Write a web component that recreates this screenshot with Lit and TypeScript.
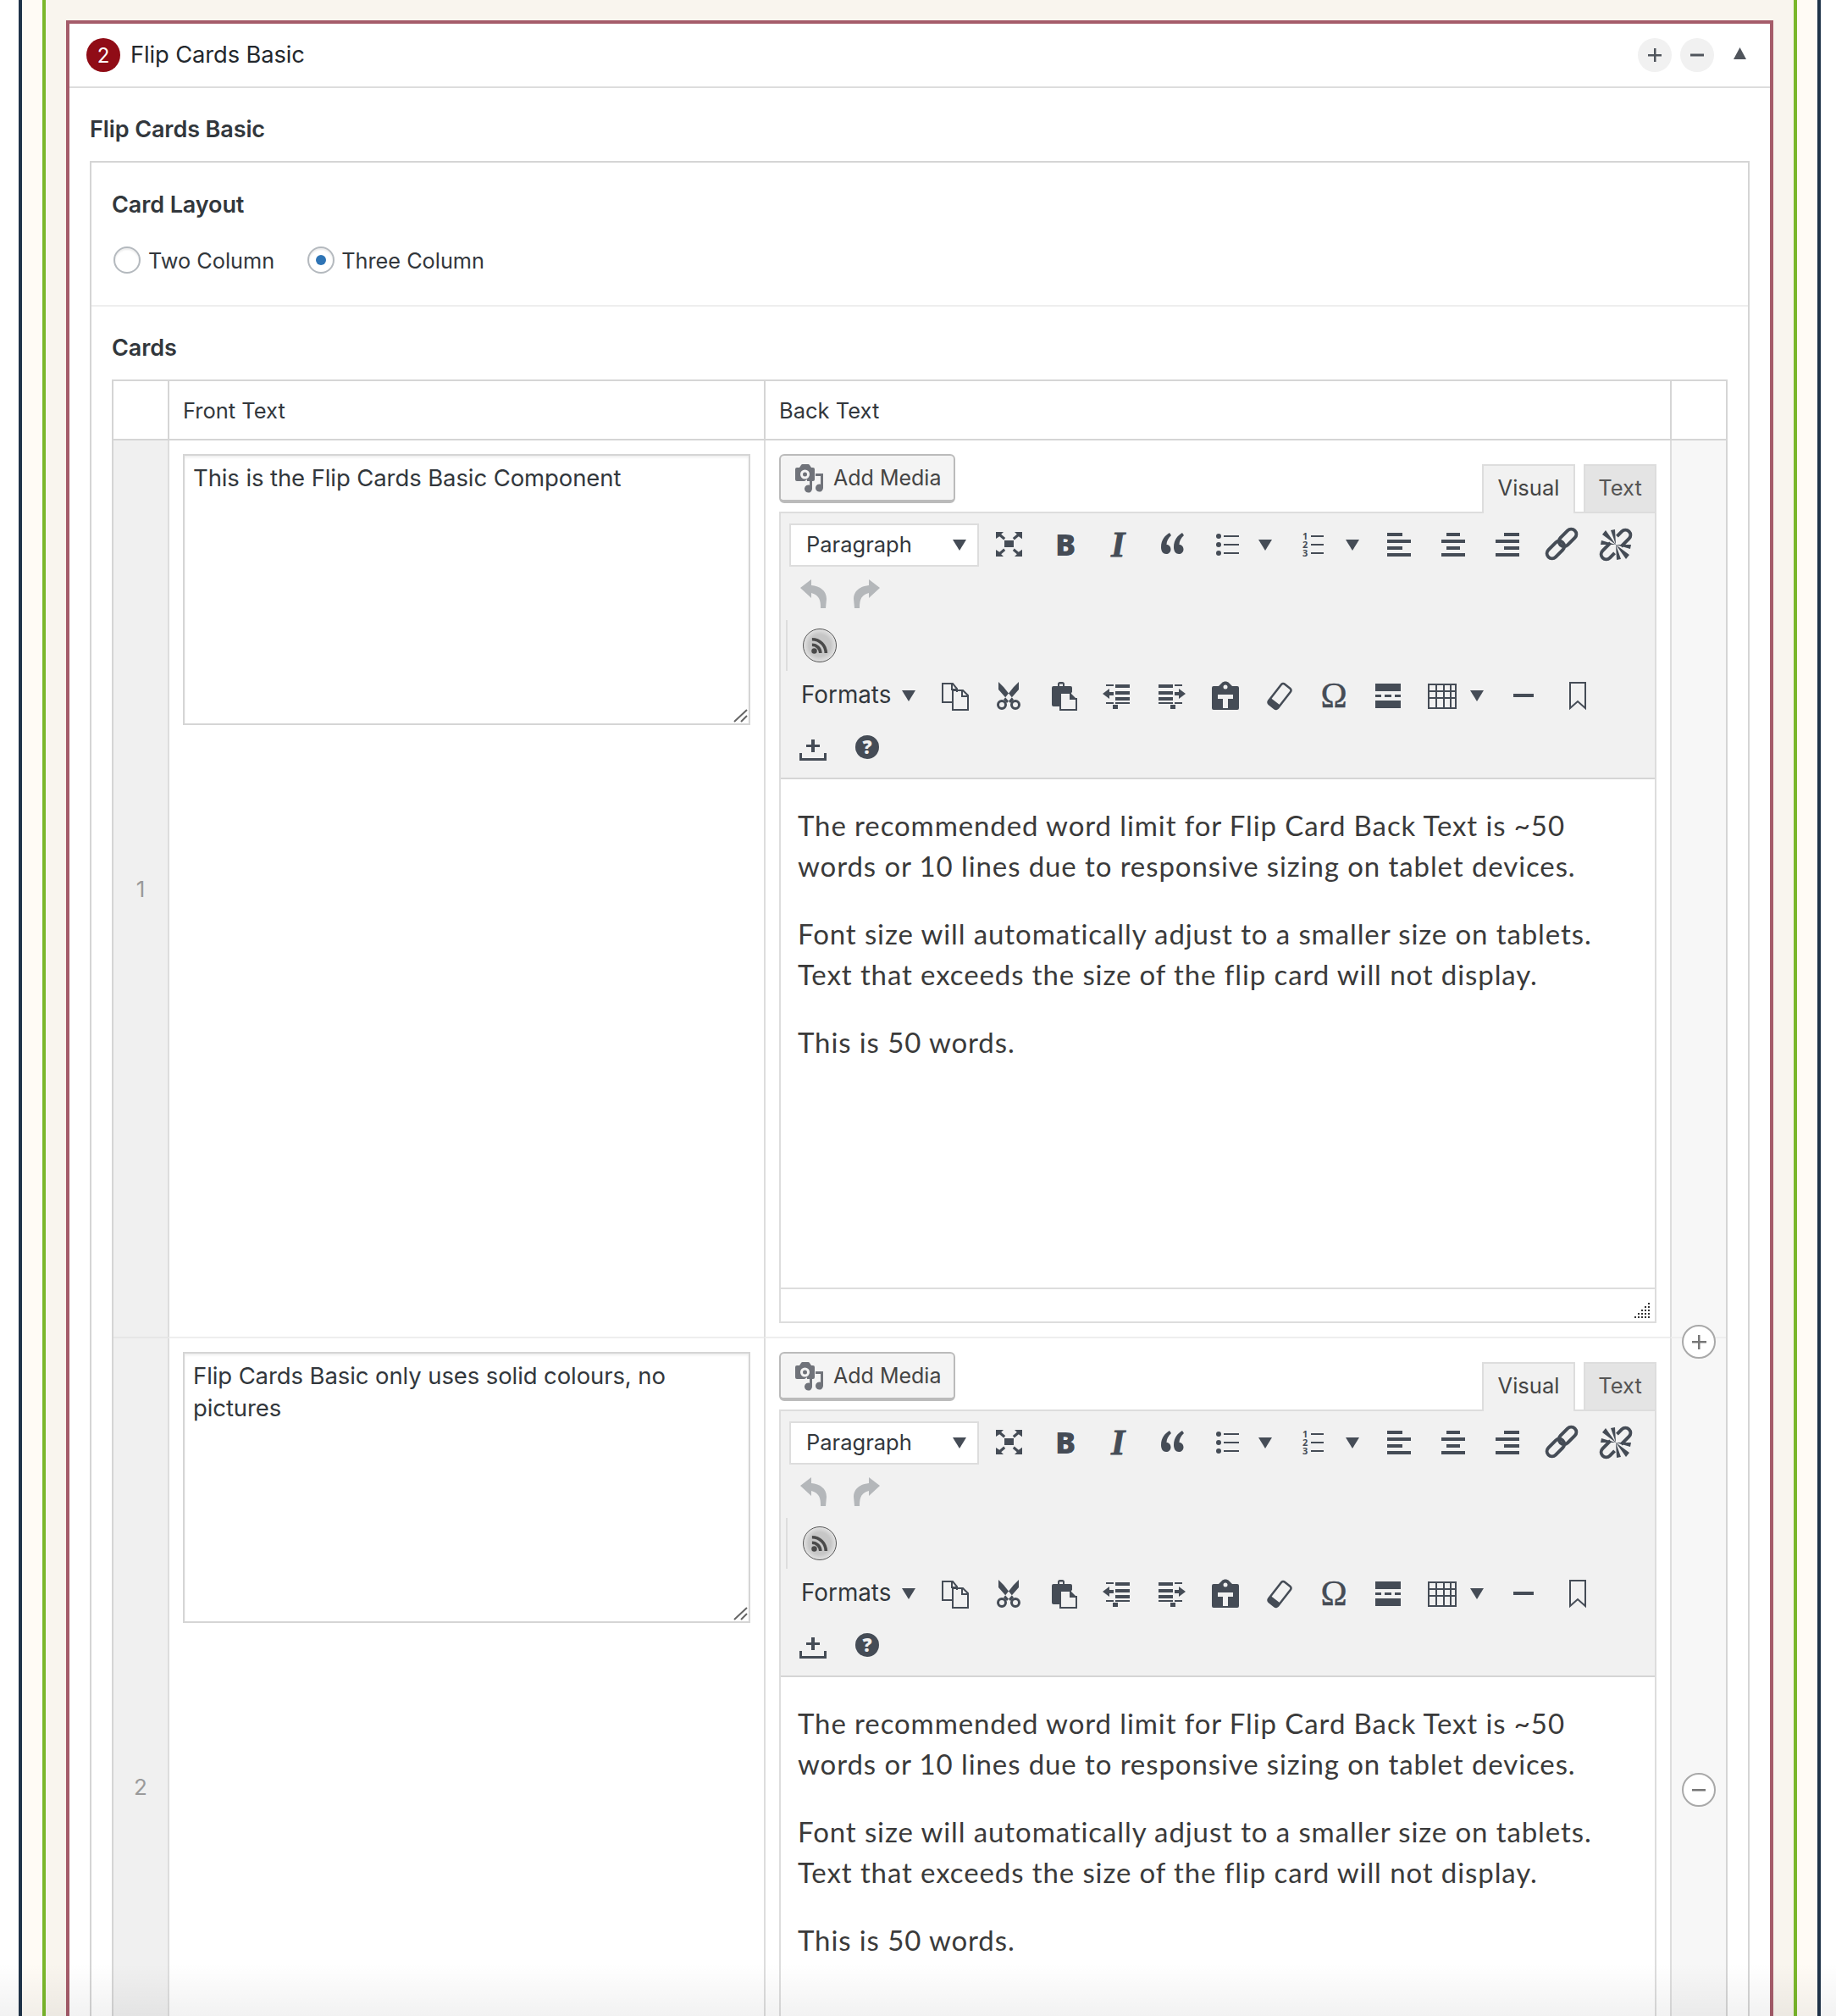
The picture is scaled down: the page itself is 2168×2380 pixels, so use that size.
import { LitElement, html, css, svg } from "lit";
import { customElement } from "lit/decorators.js";

const clip = svg`<rect x="7" y="9" width="24" height="24" rx="2"/><path d="M14 9V6.500C14 5 15 4 16.500 4h3C21 4 22 5 22 6.500V9h-2V6.500h-4V9z"/><path d="M16 16h14l7 7v15H16z" fill="#f1f1f1"/><path d="M17 17h12v7h7v13H17z" fill="none" stroke="currentColor" stroke-width="2"/><path d="M29 17l7 7h-7z"/>`;

const ICONS: Record<string, unknown> = {
  fullscreen: svg`<path d="M15 15h11v8H15zM5 5h9l-2.800 2.800 5 4.200-2 2.400-5-4.200L5 13zM36 5h-9l2.800 2.800-5 4.200 2 2.400 5-4.200 4.200 3zM5 34h9l-2.800-2.800 5-4.200-2-2.400-5 4.200L5 26zM36 34h-9l2.800-2.800-5-4.200 2-2.400 5 4.200 4.200-3z"/>`,
  bullets: svg`<circle cx="12" cy="10" r="3"/><circle cx="12" cy="20" r="3"/><circle cx="12" cy="30" r="3"/><path d="M18 9h18v2H18zM18 19h18v2H18zM18 29h18v2H18z"/>`,
  numlist: svg`<path d="M18 9h15v2H18zM18 19h15v2H18zM18 29h15v2H18z"/>`,
  quote: svg`<path d="M18 6c-5 3-10 8-10 17 0 5 2.500 8 6 8 3 0 5.500-2 5.500-5.500 0-3-2-5.500-5-5.500 0-4 2-8 5.500-11zM33 6c-5 3-10 8-10 17 0 5 2.500 8 6 8 3 0 5.500-2 5.500-5.500 0-3-2-5.500-5-5.500 0-4 2-8 5.500-11z"/>`,
  left: svg`<path d="M6 6h18v4H6zM6 14h28v4H6zM6 22h18v4H6zM6 30h28v4H6z"/>`,
  center: svg`<path d="M12 6h16v4H12zM6 14h28v4H6zM12 22h16v4H12zM6 30h28v4H6z"/>`,
  right: svg`<path d="M16 6h18v4H16zM6 14h28v4H6zM16 22h18v4H16zM6 30h28v4H6z"/>`,
  link: svg`<g transform="rotate(-45 20 19)" fill="none" stroke="currentColor" stroke-width="4"><rect x="-2" y="13" width="24" height="12" rx="6"/><rect x="18" y="13" width="24" height="12" rx="6"/></g>`,
  unlink: svg`<g transform="rotate(-45 20 20)" fill="none" stroke="currentColor" stroke-width="4"><path d="M17 14H4a6 6 0 000 12H12"/><path d="M23 26h13a6 6 0 000-12H28"/></g><path d="M20 20L4 8l4-5zM20 20L14 3l5-1zM20 20L3 15l-1 5zM20 20l16 12-4 5zM20 20l6 17-5 1zM20 20l17 5 1-5z"/>`,
  undo: svg`<path d="M5 13L18 3v7c10 1 18 6 18 16l-1 11-6 0c0-9-1-15-11-18v6z"/>`,
  redo: svg`<path d="M35 13L22 3v7C12 11 4 16 4 26l1 11 6 0c0-9 1-15 11-18v6z"/>`,
  copy: svg`<g fill="none" stroke="currentColor" stroke-width="2"><path d="M17 28H6V6h12l5 6v4M17 6v7h6"/><path d="M18 14h12l6 6v17H18zM29 14v7h7"/></g>`,
  scissors: svg`<path d="M8 4l6 6 12 15-4 4L8 13zM32 4l-6 6-12 15 4 4 14-16z"/><circle cx="12" cy="31" r="4.500" fill="none" stroke="currentColor" stroke-width="3"/><circle cx="28" cy="31" r="4.500" fill="none" stroke="currentColor" stroke-width="3"/>`,
  paste: clip,
  outdent: svg`<path d="M7 7h9v2H7zM18 7h17v4H18zM18 15h17v4H18zM18 22h17v4H18zM7 28h9v2H7zM18 28h17v2H18zM15 31h6v5h-6z M3 18l8-6v4h5v4h-5v4z"/>`,
  indent: svg`<path d="M33 7h-9v2h9zM22 7H5v4h17zM22 15H5v4h17zM22 22H5v4h17zM33 28h-9v2h9zM22 28H5v2h17zM25 31h-6v5h6zM37 18l-8-6v4h-5v4h5v4z"/>`,
  pastetext: svg`<path d="M6 9h6l4-4c2-2 6-2 8 0l4 4h6a2 2 0 012 2v24a2 2 0 01-2 2H6a2 2 0 01-2-2V11a2 2 0 012-2z"/><circle cx="20" cy="10" r="2.500" fill="#f1f1f1"/><path d="M11 19h18v5h-6v11h-6V24h-6z" fill="#f1f1f1"/>`,
  eraser: svg`<g transform="rotate(-52 20 21)"><rect x="5" y="14" width="30" height="14" rx="3" fill="none" stroke="currentColor" stroke-width="2.500"/><path d="M5 17a3 3 0 013-3h4v14H8a3 3 0 01-3-3z"/></g>`,
  omega: svg`<text x="20" y="34" class="omega">Ω</text>`,
  pagebreak: svg`<path d="M5 6h30v9H5zM5 19h7v3H5zM16 19h8v3h-8zM28 19h7v3h-7zM5 26h30v9H5z"/>`,
  table: svg`<path d="M3 6h34v30H3zm2 2v6h7V8zm9 0v6h7V8zm9 0v6h6V8zm8 0v6h4V8zM5 16v6h7v-6zm9 0v6h7v-6zm9 0v6h6v-6zm8 0v6h4v-6zM5 24v10h7V24zm9 0v10h7V24zm9 0v10h6V24zm8 0v10h4V24z" fill-rule="evenodd"/>`,
  hr: svg`<path d="M8 18h24v4H8z"/>`,
  bookmark: svg`<path d="M11 5h18v30l-9-8-9 8z" fill="none" stroke="currentColor" stroke-width="2"/>`,
  insert: svg`<path d="M18 11h4v6h6v3h-6v6h-4v-6h-6v-3h6zM4 27h3v6h26v-6h3v9H4z"/>`,
  help: svg`<circle cx="20" cy="20" r="14"/><text x="20" y="28" class="qmark">?</text>`,
};

const caret = html`<svg class="caret" viewBox="0 0 16 13"><path d="M0 0h16L8 13z"/></svg>`;

const icon = (name: string, cls = "") =>
  html`<span class="tool ${cls}"><svg viewBox="0 0 40 40">${ICONS[name]}</svg></span>`;

const glyph = (ch: string, cls: string) => html`<span class="tool"><span class=${cls}>${ch}</span></span>`;

const split = (name: string, cls: string) =>
  html`<span class="tool ${cls}"><svg viewBox="0 0 40 40">${ICONS[name]}</svg>${caret}</span>`;

const numlist = html`<span class="tool split"><span class="nums">${"1\n2\n3"}</span><svg viewBox="0 0 40 40">${ICONS.numlist}</svg>${caret}</span>`;

const mediaIcon = html`<svg class="media" viewBox="0 0 36 36">
  <path fill-rule="evenodd" d="M4 6h3l2-3a2 2 0 012-1h6a2 2 0 012 1l2 3h2a2 2 0 012 2v12a2 2 0 01-2 2H16v-2l-3 2H4a2 2 0 01-2-2V8a2 2 0 012-2zm9.500 2.500a5.500 5.500 0 100 11 5.500 5.500 0 000-11z"/>
  <circle cx="13.500" cy="14" r="2.500"/>
  <path d="M26 13h9v17a4.500 4.500 0 11-3-4.200V16h-6z"/>
  <path d="M22 22v9a4.500 4.500 0 11-3-4.200V22z"/>
</svg>`;

const grip = html`<svg class="grip" viewBox="0 0 18 18">
  ${[
    [16, 0], [16, 4], [12, 4], [16, 8], [12, 8], [8, 8], [16, 12], [12, 12], [8, 12], [4, 12], [16, 16], [12, 16], [8, 16], [4, 16], [0, 16],
  ].map(([x, y]) => svg`<rect x=${x} y=${y} width="2" height="2"/>`)}
</svg>`;

const editor = () => html`
  <div class="wp-head">
    <button class="add-media">${mediaIcon}<span>Add Media</span></button>
    <div class="tabs"><span class="tab on">Visual</span><span class="tab">Text</span></div>
  </div>
  <div class="mce">
    <div class="toolbar">
      <div class="tr r1">
        <span class="select"><span>Paragraph</span>${caret}</span>
        ${icon("fullscreen")}
        ${glyph("B", "bold")}
        ${glyph("I", "ital")}
        ${icon("quote")}
        ${split("bullets", "split")}
        ${numlist}
        ${icon("left")}${icon("center")}${icon("right")}${icon("link")}${icon("unlink")}
      </div>
      <div class="tr r2">${icon("undo", "off")}${icon("redo", "off")}</div>
      <div class="tr r3"><span class="rss"><svg viewBox="0 0 20 20"><circle cx="5" cy="15" r="2.500"/><path d="M3 8a9 9 0 019 9h-2.800A6.200 6.200 0 003 10.800zM3 3a14 14 0 0114 14h-2.800A11.200 11.200 0 003 5.800z"/></svg></span></div>
      <div class="tr r4">
        <span class="formats"><span>Formats</span>${caret}</span>
        ${icon("copy")}${icon("scissors")}${icon("paste")}${icon("outdent")}${icon("indent")}${icon("pastetext")}${icon("eraser")}${icon("omega")}${icon("pagebreak")}
        ${split("table", "split narrow")}
        ${icon("hr")}${icon("bookmark")}
      </div>
      <div class="tr r5">${icon("insert")}${icon("help")}</div>
    </div>
    <div class="content">
      <p>The recommended word limit for Flip Card Back Text is ~50 words or 10 lines due to responsive sizing on tablet devices.</p>
      <p>Font size will automatically adjust to a smaller size on tablets. Text that exceeds the size of the flip card will not display.</p>
      <p>This is 50 words.</p>
    </div>
    <div class="status">${grip}</div>
  </div>
`;

@customElement("app-root")
export class AppRoot extends LitElement {
  static styles = css`
    :host {
      display: block;
      position: relative;
      height: 2380px;
      overflow: hidden;
      box-sizing: border-box;
      padding: 0 18px 0 22px;
      background: #fff;
      font-family: Inter, "Liberation Sans", sans-serif;
      color: #32373c;
    }
    * { box-sizing: border-box; }
    .navy { border: solid #1f3349; border-width: 0 4px; padding: 0 24px; background: #fffbf5; height: 100%; }
    .green { border: solid #7ab72b; border-width: 0 4px; padding: 24px 24px 0; background: #f9f5ee; height: 100%; }
    .panel { border: 4px solid #a55c6a; border-bottom: 0; background: #fff; height: 100%; }
    .bar { height: 76px; border-bottom: 2px solid #ddd; display: flex; align-items: center; padding: 0 28px 0 20px; }
    .badge { width: 40px; height: 40px; border-radius: 50%; background: #900c16; color: #fff; font-size: 24px; display: flex; align-items: center; justify-content: center; margin-right: 12px; }
    .bar-title { font-size: 27.300px; color: #23282d; flex: 1; letter-spacing: -.1px; padding-bottom: 2px; }
    .round { width: 40px; height: 40px; border-radius: 50%; background: #f1f1f1; margin-left: 10px; display: block; }
    .round svg { width: 40px; height: 40px; fill: #50555c; display: block; }
    .up { width: 15px; height: 14px; margin: 0 0 4px 23px; fill: #50555c; }
    .body { padding: 0 24px; }
    h3 { margin: 0; font-size: 27px; font-weight: 600; color: #32373c; line-height: 36px; letter-spacing: -.1px; }
    .body > h3 { padding: 31px 0 19px; height: 86px; }
    .box { border: 2px solid #d5d5d5; border-bottom: 0; }
    .field-a { height: 168px; padding: 32px 24px 0; border-bottom: 0; }
    .divider { height: 2px; background: #eee; }
    .radios { display: flex; margin-top: 31px; align-items: center; height: 32px; }
    .radio { display: flex; align-items: center; font-size: 25.300px; color: #32373c; margin-right: 39px; }
    .dot { width: 32px; height: 32px; border-radius: 50%; border: 2px solid #b4b9be; background: #fff; margin: 0 9px 0 2px; display: flex; align-items: center; justify-content: center; box-shadow: inset 0 2px 2px rgba(0,0,0,.08); }
    .dot.on::after { content: ""; width: 12px; height: 12px; border-radius: 50%; background: #2e74b5; }
    .radio:nth-child(2) .dot { margin: 0 8px 0 0; }
    .field-b { padding: 31px 24px 0; }
    .field-b h3 { margin-bottom: 19px; }
    .grid { border: 2px solid #d5d5d5; border-bottom: 0; display: grid; grid-template-columns: 64px 704px 1070px 66px; }
    .th { height: 70px; border-bottom: 2px solid #d5d5d5; display: flex; align-items: center; padding-left: 16px; font-size: 25.500px; color: #32373c; }
    .sep { border-left: 2px solid #ddd; }
    .th.sep { border-left-color: #d5d5d5; }
    .th:first-child { padding: 0; }
    .num { background: #f0f0f0; display: flex; align-items: center; justify-content: center; font-size: 26px; color: #9a9a9a; border-bottom: 2px solid #e6e6e6; height: 1060px; }
    .front { padding: 16px; border-bottom: 2px solid #eee; }
    .ta { position: relative; }
    textarea { display: block; width: 670px; height: 320px; border: 2px solid #d5d5d5; padding: 7px 8px 0 10px; margin: 0; font: 27.500px/38px Inter, "Liberation Sans", sans-serif; color: #32373c; box-shadow: inset 0 2px 3px rgba(0,0,0,.07); outline: 0; background: #fff; resize: none; border-radius: 0; letter-spacing: -.1px; }
    .handle { position: absolute; right: 2px; bottom: 2px; width: 18px; height: 18px; stroke: #666; stroke-width: 2; fill: none; }
    .back { padding: 16px; border-bottom: 2px solid #eee; }
    .act { position: relative; background: #f7f7f7; border-bottom: 2px solid #eee; }
    .circle { position: absolute; left: 12px; width: 40px; height: 40px; border-radius: 50%; border: 2px solid #a9a9a9; background: #fff; z-index: 2; }
    .circle.add { bottom: -26px; }
    .circle.rem { top: 513px; }
    .circle svg { width: 36px; height: 36px; fill: #777; display: block; }
    .wp-head { display: flex; justify-content: space-between; align-items: flex-end; height: 68px; position: relative; z-index: 1; }
    .add-media { align-self: flex-start; width: 208px; height: 58px; border: 2px solid #bbb; border-bottom-width: 4px; border-radius: 6px; background: #f4f4f4; display: flex; align-items: center; padding: 0 0 0 15px; font: 25px Inter, "Liberation Sans", sans-serif; color: #444; }
    .media { width: 36px; height: 36px; fill: #70737a; margin-right: 11px; flex: none; }
    .tabs { display: flex; align-items: flex-end; gap: 10px; }
    .tab { height: 56px; width: 86px; background: #e4e4e4; border: 2px solid #ddd; border-bottom: 0; display: flex; align-items: center; justify-content: center; font-size: 25.500px; color: #555; padding-bottom: 3px; }
    .tab.on { height: 58px; width: 110px; background: #f1f1f1; margin-bottom: -2px; color: #444; padding-bottom: 6px; }
    .mce { border: 2px solid #ddd; }
    .toolbar { height: 314px; background: #f1f1f1; border-bottom: 2px solid #d5d5d5; padding: 10px 0 0 6px; color: #454c56; }
    .tr { display: flex; align-items: center; }
    .r1 { height: 54px; }
    .r2 { height: 62px; }
    .r3 { height: 60px; position: relative; padding-left: 20px; }
    .r3::before { content: ""; position: absolute; left: 0; top: 0; bottom: 0; width: 2px; background: #ddd; }
    .r4 { height: 58px; }
    .r5 { height: 62px; padding-top: 2px; }
    .tool { position: relative; width: 64px; height: 40px; flex: none; display: flex; align-items: center; justify-content: flex-start; padding-left: 12px; color: #454c56; }
    .tool svg { width: 40px; height: 40px; fill: currentColor; flex: none; overflow: visible; }
    .tool.off { color: #b4b7ba; }
    .tool.split { width: 102px; }
    .tool.split + .tool.split { width: 103px; padding-left: 13px; }
    .tool.narrow { width: 96px; }
    .tool .caret, .select .caret, .formats .caret { width: 16px; height: 13px; fill: #454c56; flex: none; }
    .tool.split .caret { margin-left: 19px; }
    .tool.narrow .caret { margin-left: 13px; }
    .nums { position: absolute; left: 21px; top: 5px; white-space: pre; text-align: center; font: 700 11px/10px "Open Sans", sans-serif; }
    .omega { font: 42px "Liberation Serif", serif; text-anchor: middle; stroke: currentColor; stroke-width: .4; }
    .qmark { font: 800 22px "Open Sans", sans-serif; text-anchor: middle; fill: #f1f1f1; }
    .bold { font: 800 36px "Open Sans", sans-serif; margin-left: 11px; line-height: 40px; }
    .ital { font: italic 700 42px "Liberation Serif", serif; margin-left: 13px; line-height: 40px; -webkit-text-stroke: .8px currentColor; }
    .select { width: 224px; height: 51px; margin-left: 4px; margin-right: 3px; background: #fff; border: 2px solid #ddd; display: flex; align-items: center; justify-content: space-between; padding: 0 13px 2px 18px; font-size: 25.500px; color: #32373c; flex: none; }
    .select .caret { margin-top: 2px; }
    .rss { width: 40px; height: 40px; border-radius: 50%; border: 1px solid #555; background: radial-gradient(circle, #c6c6c6 0 48%, #e8e8e8 76%, #fff 92%); display: flex; align-items: center; justify-content: center; }
    .rss svg { width: 26px; height: 26px; fill: #4a4a4a; }
    .formats { width: 163px; margin-left: 4px; padding-left: 14px; display: flex; align-items: center; font-size: 27.800px; color: #32373c; flex: none; padding-bottom: 2px; }
    .formats .caret { margin: 3px 0 0 13px; }
    .content { height: 602px; background: #fff; padding: 0 20px; display: flow-root; border-bottom: 2px solid #ddd; font: 400 33px/48px Lato, "Liberation Sans", sans-serif; color: #3a3a3a; letter-spacing: .9px; }
    .content p { margin: 32px 0; }
    .content p:first-child { margin-top: 30px; }
    .status { height: 38px; background: #fff; position: relative; }
    .grip { position: absolute; right: 6px; bottom: 4px; width: 18px; height: 18px; fill: #333; }
    .fade { position: absolute; left: 0; right: 0; bottom: 0; height: 62px; background: linear-gradient(rgba(0,0,0,0), rgba(0,0,0,.05)); pointer-events: none; z-index: 5; }
  `;

  private row(n: number, text: string, action: unknown) {
    return html`
      <div class="num">${n}</div>
      <div class="front sep"><div class="ta"><textarea>${text}</textarea><svg class="handle" viewBox="0 0 18 18"><path d="M1 16L16 2M9 16l7-7"/></svg></div></div>
      <div class="back sep">${editor()}</div>
      <div class="act sep">${action}</div>
    `;
  }

  render() {
    return html`
      <div class="navy"><div class="green"><div class="panel">
        <div class="bar">
          <span class="badge">2</span>
          <span class="bar-title">Flip Cards Basic</span>
          <span class="round"><svg viewBox="0 0 40 40"><path d="M19 12h2.500v7H28v2.500h-6.500V28H19v-6.500h-7V19h7z"/></svg></span>
          <span class="round"><svg viewBox="0 0 40 40"><path d="M12 18.500h16v3H12z"/></svg></span>
          <svg class="up" viewBox="0 0 15 14"><path d="M7.500 0L15 14H0z"/></svg>
        </div>
        <div class="body">
          <h3>Flip Cards Basic</h3>
          <div class="box">
            <div class="field-a">
              <h3>Card Layout</h3>
              <div class="radios">
                <label class="radio"><span class="dot"></span>Two Column</label>
                <label class="radio"><span class="dot on"></span>Three Column</label>
              </div>
            </div>
            <div class="divider"></div>
            <div class="field-b">
              <h3>Cards</h3>
              <div class="grid">
                <div class="th"></div>
                <div class="th sep">Front Text</div>
                <div class="th sep">Back Text</div>
                <div class="th sep"></div>
                ${this.row(1, "This is the Flip Cards Basic Component", html`<span class="circle add"><svg viewBox="0 0 36 36"><path d="M17 10h2.500v7H27v2.500h-7.500V27H17v-7.500h-7V17h7z"/></svg></span>`)}
                ${this.row(2, "Flip Cards Basic only uses solid colours, no pictures", html`<span class="circle rem"><svg viewBox="0 0 36 36"><path d="M10 17h16v2.500H10z"/></svg></span>`)}
              </div>
            </div>
          </div>
        </div>
      </div></div></div>
      <div class="fade"></div>
    `;
  }
}
